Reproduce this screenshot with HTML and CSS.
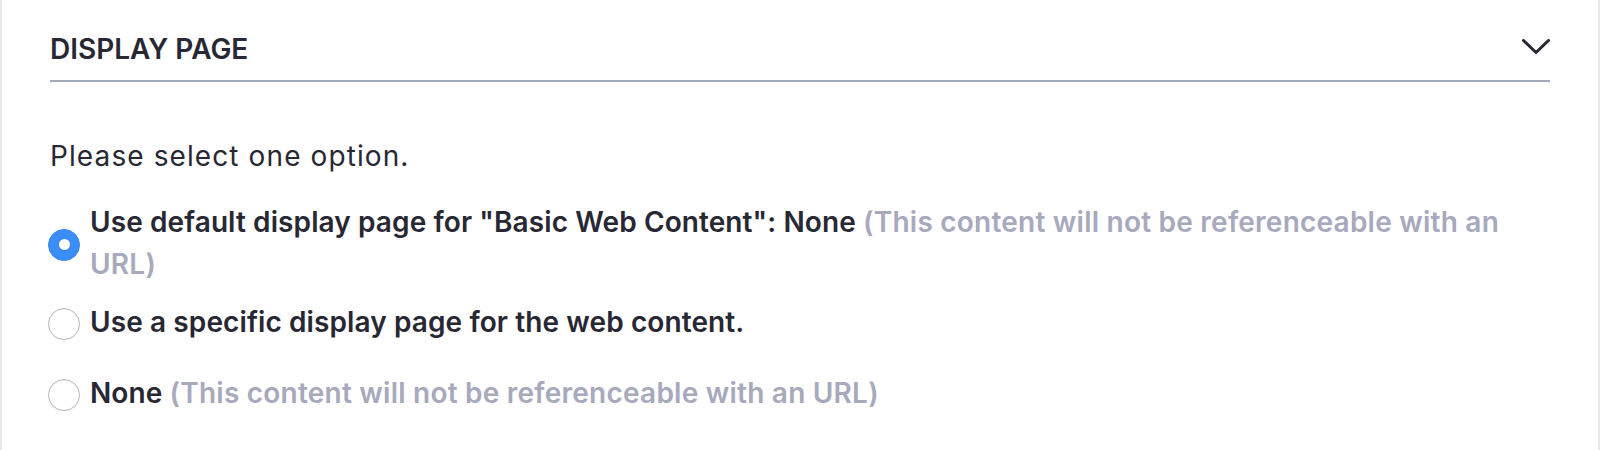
FILE: index.html
```html
<!DOCTYPE html>
<html lang="en">
<head>
<meta charset="utf-8">
<title>Display Page</title>
<link rel="stylesheet" href="styles.css">
</head>
<body>
<section class="panel">
  <header class="panel-header">
    <h2 class="panel-title">DISPLAY PAGE</h2>
    <svg class="chevron" width="28" height="16" viewBox="0 0 28 16" aria-hidden="true">
      <polyline points="1.5,1.5 14,13.5 26.5,1.5" fill="none" stroke="#272833" stroke-width="3" stroke-linecap="round" stroke-linejoin="round"/>
    </svg>
  </header>
  <div class="panel-body">
    <p class="hint">Please select one option.</p>
    <div class="options">
      <label class="option">
        <span class="radio checked"></span>
        <span class="option-text">Use default display page for "Basic Web Content": None <span class="muted">(This content will not be referenceable with an URL)</span></span>
      </label>
      <label class="option">
        <span class="radio"></span>
        <span class="option-text">Use a specific display page for the web content.</span>
      </label>
      <label class="option option-last">
        <span class="radio"></span>
        <span class="option-text">None <span class="muted">(This content will not be referenceable with an URL)</span></span>
      </label>
    </div>
  </div>
</section>
</body>
</html>
```
FILE: styles.css
```css
html, body {
  margin: 0;
  background: #ffffff;
}

.panel {
  box-sizing: border-box;
  height: 450px;
  border-left: 2px solid #e7e7ed;
  border-right: 2px solid #e7e7ed;
  padding: 28px 48px 0;
  font-family: "Inter", "Noto Sans", sans-serif;
  color: #272833;
}

.panel-header {
  display: flex;
  justify-content: space-between;
  align-items: center;
  padding-bottom: 10px;
  border-bottom: 2px solid #a7a9bc;
}

.panel-title {
  margin: 0;
  font-size: 28px;
  line-height: 42px;
  font-weight: 600;
  letter-spacing: 0;
}

.chevron {
  display: block;
  margin-top: -5px;
}

.panel-body {
  padding-top: 53px;
}

.hint {
  margin: 0;
  font-size: 28px;
  line-height: 42px;
  font-weight: 400;
  letter-spacing: 1.1px;
}

.options {
  margin-top: 24px;
}

.option {
  display: flex;
  align-items: center;
  gap: 10px;
  margin-left: -2px;
  font-size: 28px;
  line-height: 42px;
  font-weight: 600;
  letter-spacing: 0.1px;
}

.option + .option {
  margin-top: 16px;
}

.option.option-last {
  margin-top: 29px;
}

.radio {
  position: relative;
  flex: 0 0 auto;
  box-sizing: border-box;
  width: 32px;
  height: 32px;
  margin-top: 3px;
  border-radius: 50%;
  background: #ffffff;
  border: 1px solid #bdbdbd;
  box-shadow: inset 0 1px 1px rgba(0, 0, 0, 0.08), 0 0.5px 1px rgba(0, 0, 0, 0.08);
}

.radio.checked {
  background: #3b8ef6;
  border-color: #3688f2;
  box-shadow: none;
}

.radio.checked::after {
  content: "";
  position: absolute;
  left: 50%;
  top: 50%;
  width: 11px;
  height: 11px;
  margin: -5.5px 0 0 -5.5px;
  border-radius: 50%;
  background: #ffffff;
  box-shadow: 0 1px 1px rgba(0, 0, 0, 0.15);
}

.option-text {
  flex: 1 1 auto;
}

.muted {
  color: #a7a9bc;
  letter-spacing: 0.23px;
}
```
